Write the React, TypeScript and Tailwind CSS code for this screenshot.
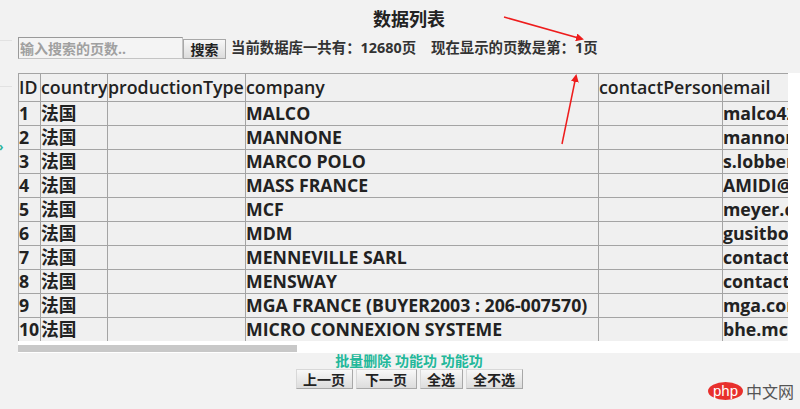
import React from 'react';

// One row of the data list
interface Company {
  id: number;
  country: string;
  productionType: string;
  company: string;
  contactPerson: string;
  email: string;
}

const rows: Company[] = [
  { id: 1, country: '法国', productionType: '', company: 'MALCO', contactPerson: '', email: 'malco42@wanadoo.fr' },
  { id: 2, country: '法国', productionType: '', company: 'MANNONE', contactPerson: '', email: 'mannone@wanadoo.fr' },
  { id: 3, country: '法国', productionType: '', company: 'MARCO POLO', contactPerson: '', email: 's.lobbert@marcopolo.fr' },
  { id: 4, country: '法国', productionType: '', company: 'MASS FRANCE', contactPerson: '', email: 'AMIDI@massfrance.fr' },
  { id: 5, country: '法国', productionType: '', company: 'MCF', contactPerson: '', email: 'meyer.c@mcf.fr' },
  { id: 6, country: '法国', productionType: '', company: 'MDM', contactPerson: '', email: 'gusitbo@mdm.fr' },
  { id: 7, country: '法国', productionType: '', company: 'MENNEVILLE SARL', contactPerson: '', email: 'contact@menneville.fr' },
  { id: 8, country: '法国', productionType: '', company: 'MENSWAY', contactPerson: '', email: 'contact@mensway.fr' },
  { id: 9, country: '法国', productionType: '', company: 'MGA FRANCE (BUYER2003 : 206-007570)', contactPerson: '', email: 'mga.com@wanadoo.fr' },
  { id: 10, country: '法国', productionType: '', company: 'MICRO CONNEXION SYSTEME', contactPerson: '', email: 'bhe.mcs@wanadoo.fr' },
];

const FONT = "font-['Open_Sans','Noto_Sans_CJK_SC',sans-serif]";

const PageButton: React.FC<{ label: string; width: string }> = ({ label, width }) => (
  <button
    className={`${width} h-[20px] flex items-center justify-center text-[14px] font-bold text-[#222] bg-gradient-to-b from-[#f8f8f8] to-[#dcdcdc] border border-[#a8a8a8] border-t-[#d8d8d8] border-l-[#d8d8d8]`}
  >
    {label}
  </button>
);

export default function App() {
  const th = 'h-[27px] p-0 text-left align-middle text-[17.8px] font-semibold text-[#222] border border-[#a4a4a4] whitespace-nowrap overflow-hidden';
  const td = 'h-[24px] p-0 text-left align-middle text-[17.7px] font-bold text-[#222] border border-[#a4a4a4] whitespace-nowrap overflow-hidden leading-[22px]';

  return (
    <div className={`relative w-[800px] h-[409px] bg-[#f2f2f2] overflow-hidden flex ${FONT}`}>
      {/* faint left sidebar edge */}
      <div className="w-[12px] flex flex-col">
        <div className="h-[41px] border-b border-[#e2e2e2]" />
        <div className="h-[46px] border-b border-[#e2e2e2]" />
        <div className="h-[52px]" />
        <div className="text-[#2bb39a] text-[12px] leading-[16px] font-bold -ml-[1px]">›</div>
      </div>

      <div className="flex-1 pl-[6px] flex flex-col">
        <h1 className="h-[36px] pt-[8px] text-center text-[18px] font-bold text-[#222] leading-[22px]">数据列表</h1>

        {/* search row */}
        <div className="h-[37px] flex items-start">
          <div className="mt-[1px] w-[165px] h-[22px] bg-[#f4f4f4] border border-[#c4c4c4] border-t-[#9a9a9a] border-l-[#9a9a9a] flex items-center pl-[1px] text-[14px] font-bold text-[#a0a0a0]">
            输入搜索的页数..
          </div>
          <button className="mt-[3px] w-[43px] h-[20px] flex items-center justify-center text-[14px] font-bold text-[#222] bg-gradient-to-b from-[#f8f8f8] to-[#dcdcdc] border border-[#a8a8a8]">
            搜索
          </button>
          <div className="ml-[5px] mt-[2px] text-[14.4px] font-bold text-[#333] leading-[20px] whitespace-pre">
            当前数据库一共有：12680页{'    '}现在显示的页数是第：1页
          </div>
        </div>

        {/* table scroll area */}
        <div className="h-[280px] bg-white flex flex-col">
          <div className="w-[770px] h-[268px] overflow-hidden">
            <table className="table-fixed border-collapse bg-[#f0f0f0] w-[930px] border border-[#6e6e6e]">
              <colgroup>
                <col className="w-[22px]" />
                <col className="w-[67px]" />
                <col className="w-[138px]" />
                <col className="w-[353px]" />
                <col className="w-[124px]" />
                <col className="w-[226px]" />
              </colgroup>
              <thead>
                <tr>
                  <th className={th}>ID</th>
                  <th className={th}>country</th>
                  <th className={th}>productionType</th>
                  <th className={th}>company</th>
                  <th className={th}>contactPerson</th>
                  <th className={th}>email</th>
                </tr>
              </thead>
              <tbody>
                {rows.map((r) => (
                  <tr key={r.id}>
                    <td className={td}>{r.id}</td>
                    <td className={td}>{r.country}</td>
                    <td className={td}>{r.productionType}</td>
                    <td className={td}>{r.company}</td>
                    <td className={td}>{r.contactPerson}</td>
                    <td className={td}>{r.email}</td>
                  </tr>
                ))}
              </tbody>
            </table>
          </div>
          <div className="mt-[4px] w-[279px] h-[7px] bg-[#c8c8c8]" />
        </div>

        {/* actions */}
        <div className="text-center text-[14px] font-bold text-[#22b89a] leading-[16px]">
          批量删除 功能功 功能功
        </div>
        <div className="flex justify-center gap-[3px]">
          <PageButton label="上一页" width="w-[57px]" />
          <PageButton label="下一页" width="w-[61px]" />
          <PageButton label="全选" width="w-[43px]" />
          <PageButton label="全不选" width="w-[57px]" />
        </div>
      </div>

      {/* php中文网 watermark */}
      <div className="absolute left-[708px] top-[382px] flex items-center gap-[3px]">
        <div className="w-[35px] h-[18px] rounded-[50%] bg-[#e8302d] flex items-center justify-center text-white text-[15px] font-['Liberation_Sans',sans-serif] leading-none pb-[2px]">
          php
        </div>
        <div className="text-[16px] text-[#555] font-['Noto_Sans_CJK_SC',sans-serif] leading-none">中文网</div>
      </div>

      {/* annotation arrows */}
      <svg className="absolute left-0 top-0 pointer-events-none" width="800" height="409">
        <defs>
          <marker id="ah" markerWidth="8" markerHeight="8" refX="6" refY="4" orient="auto" markerUnits="userSpaceOnUse">
            <path d="M0,0 L8,4 L0,8 z" fill="#ee1c1c" />
          </marker>
        </defs>
        <line x1="504" y1="17" x2="582" y2="39" stroke="#ee1c1c" strokeWidth="1.5" markerEnd="url(#ah)" />
        <line x1="562" y1="144" x2="576" y2="76" stroke="#ee1c1c" strokeWidth="1.5" markerEnd="url(#ah)" />
      </svg>
    </div>
  );
}
